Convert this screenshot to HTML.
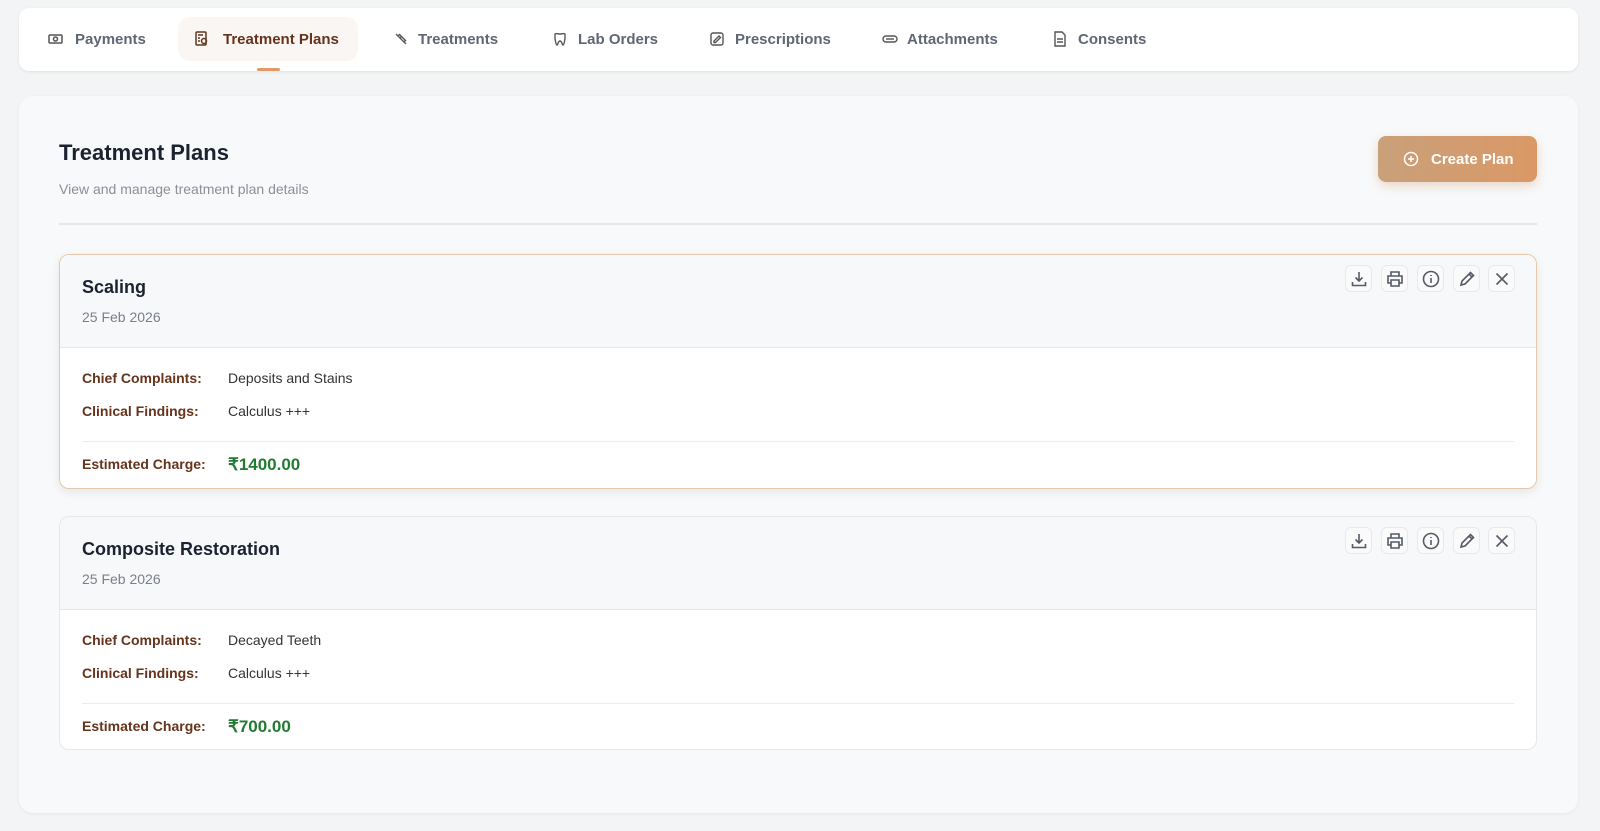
<!DOCTYPE html>
<html><head><meta charset="utf-8"><style>
*{box-sizing:border-box;margin:0;padding:0}
body{width:1600px;height:831px;background:#f3f4f5;font-family:"Liberation Sans",sans-serif;position:relative;overflow:hidden}
.a{position:absolute}
.nav{left:19px;top:8px;width:1559px;height:63px;background:#fff;border-radius:10px;box-shadow:0 1px 3px rgba(0,0,0,.08)}
.tab{position:absolute;top:24px;font-size:15px;font-weight:bold;color:#5f6675;white-space:nowrap;line-height:16px}
.ti{position:absolute;top:23px;width:16px;height:16px}
.main{left:19px;top:96px;width:1559px;height:717px;background:#f8f9fa;border-radius:14px;box-shadow:0 1px 3px rgba(0,0,0,.06)}
.card{position:absolute;left:59px;width:1478px;background:#fff;border-radius:10px;border:1px solid #e6e7ea;overflow:hidden}
.card.sel{border-color:#e2c9ac;box-shadow:0 3px 10px rgba(0,0,0,.08)}
.hd{height:93px;background:#f7f8fa;border-bottom:1px solid #ebe6e1;position:relative}
.ct{position:absolute;left:22px;top:22px;font-size:18px;font-weight:bold;color:#1b2230}
.dt{position:absolute;left:22px;top:54px;font-size:14px;color:#7a7f88}
.lb{position:absolute;left:22px;font-size:14px;font-weight:bold;color:#66331c}
.vl{position:absolute;left:168px;font-size:14px;color:#333}
.amt{position:absolute;left:168px;font-size:17px;font-weight:bold;color:#237a32}
.ln{position:absolute;left:22px;right:22px;height:1px;background:#ececec}
.ib{position:absolute;top:10px;width:27px;height:27px;border:1px solid #e8e9ec;border-radius:6px;background:#fafafa}
.ib svg{position:absolute;left:4px;top:4px}
</style></head><body>
<div class="a nav">
 <div class="a" style="left:159px;top:9px;width:180px;height:44px;background:#faf6f3;border-radius:12px"></div>
 <div class="a" style="left:238px;top:60px;width:23px;height:3px;background:#e09a6a;border-radius:2px"></div>
 <svg class="ti" style="left:29px" viewBox="0 0 16 16" fill="none" stroke="#555" stroke-width="1.5"><rect x="1" y="4" width="13" height="8" rx="1"/><circle cx="7.5" cy="8" r="2"/></svg>
 <div class="tab" style="left:56px">Payments</div>
 <svg class="ti" style="left:175px" viewBox="0 0 16 16" fill="none" stroke="#66331c" stroke-width="1.5"><rect x="2" y="1" width="10" height="13" rx="1"/><path d="M4 4h5M4 7h2M4 10h2"/><circle cx="10" cy="10" r="2.5"/></svg>
 <div class="tab" style="left:204px;color:#66331c">Treatment Plans</div>
 <svg class="ti" style="left:374px" viewBox="0 0 16 16" fill="none" stroke="#555" stroke-width="1.4"><path d="M3 3l2 2M5 5l6 6 1.5-1.5-6-6zM11 11l2 2M7 6l1 1"/></svg>
 <div class="tab" style="left:399px">Treatments</div>
 <svg class="ti" style="left:533px" viewBox="0 0 16 16" fill="none" stroke="#555" stroke-width="1.4"><path d="M3 3c2-1 3 0 5 0s3-1 5 0v3c0 3-1 8-2 8s-1-4-3-4-2 4-3 4-2-5-2-8z"/></svg>
 <div class="tab" style="left:559px">Lab Orders</div>
 <svg class="ti" style="left:690px" viewBox="0 0 16 16" fill="none" stroke="#555" stroke-width="1.4"><rect x="2" y="2" width="12" height="12" rx="2"/><path d="M5 10l5-5 1.5 1.5-5 5H5z"/></svg>
 <div class="tab" style="left:716px">Prescriptions</div>
 <svg class="ti" style="left:863px" viewBox="0 0 16 16" fill="none" stroke="#555" stroke-width="1.4"><rect x="1" y="5" width="14" height="6" rx="3"/><path d="M4 8h8"/></svg>
 <div class="tab" style="left:888px">Attachments</div>
 <svg class="ti" style="left:1033px" viewBox="0 0 16 16" fill="none" stroke="#555" stroke-width="1.4"><path d="M3 1h7l3 3v11H3z M5 8h6M5 11h6"/></svg>
 <div class="tab" style="left:1059px">Consents</div>
</div>
<div class="a main"></div>
<div class="a" style="left:59px;top:140px;font-size:22px;font-weight:bold;color:#1b2230">Treatment Plans</div>
<div class="a" style="left:59px;top:181px;font-size:14px;color:#8a8f98">View and manage treatment plan details</div>
<div class="a" style="left:1378px;top:136px;width:159px;height:46px;border-radius:8px;background:linear-gradient(90deg,#c9a07a,#db9866);box-shadow:0 4px 10px rgba(200,140,90,.3);color:#fff;font-size:15px;font-weight:bold">
 <svg class="a" style="left:25px;top:15px" width="16" height="16" viewBox="0 0 16 16" fill="none" stroke="#fff" stroke-width="1.5"><circle cx="8" cy="8" r="6.5"/><path d="M8 5v6M5 8h6"/></svg>
 <span class="a" style="left:53px;top:15px">Create Plan</span>
</div>
<div class="a" style="left:59px;top:223px;width:1478px;height:2px;background:#e3e6ea"></div>

<div class="card sel" style="top:254px;height:235px">
 <div class="hd"><div class="ct">Scaling</div><div class="dt">25 Feb 2026</div>
  ICONS1
 </div>
 <div class="lb" style="top:115px">Chief Complaints:</div><div class="vl" style="top:115px">Deposits and Stains</div>
 <div class="lb" style="top:148px">Clinical Findings:</div><div class="vl" style="top:148px">Calculus +++</div>
 <div class="ln" style="top:186px"></div>
 <div class="lb" style="top:201px">Estimated Charge:</div><div class="amt" style="top:200px">₹1400.00</div>
</div>
<div class="card" style="top:516px;height:234px">
 <div class="hd"><div class="ct">Composite Restoration</div><div class="dt">25 Feb 2026</div>
  ICONS2
 </div>
 <div class="lb" style="top:115px">Chief Complaints:</div><div class="vl" style="top:115px">Decayed Teeth</div>
 <div class="lb" style="top:148px">Clinical Findings:</div><div class="vl" style="top:148px">Calculus +++</div>
 <div class="ln" style="top:186px"></div>
 <div class="lb" style="top:201px">Estimated Charge:</div><div class="amt" style="top:200px">₹700.00</div>
</div>
<script>
var ic='<div class="ib" style="left:1285px"><svg width="18" height="18" viewBox="0 0 18 18" fill="none" stroke="#555a64" stroke-width="1.6"><path d="M9 2v9M5.5 7.5L9 11l3.5-3.5M2.5 12v3.5h13V12"/></svg></div>'+
'<div class="ib" style="left:1321px"><svg width="18" height="18" viewBox="0 0 18 18" fill="none" stroke="#555a64" stroke-width="1.6"><path d="M5 6V2h8v4M5 13H2V6h14v7h-3M5 10h8v6H5z"/></svg></div>'+
'<div class="ib" style="left:1357px"><svg width="18" height="18" viewBox="0 0 18 18" fill="none" stroke="#555a64" stroke-width="1.6"><circle cx="9" cy="9" r="7.5"/><path d="M9 8v5M9 5v1"/></svg></div>'+
'<div class="ib" style="left:1393px"><svg width="18" height="18" viewBox="0 0 18 18" fill="none" stroke="#555a64" stroke-width="1.6"><path d="M3 15l1-4 8.5-8.5 3 3L7 14zM11 4l3 3"/></svg></div>'+
'<div class="ib" style="left:1428px"><svg width="18" height="18" viewBox="0 0 18 18" fill="none" stroke="#555a64" stroke-width="1.6"><path d="M3.5 3.5l11 11M14.5 3.5l-11 11"/></svg></div>';
document.querySelectorAll('.hd').forEach(function(h){h.innerHTML=h.innerHTML.replace(/ICONS\d/,ic);});
</script>
</body></html>
